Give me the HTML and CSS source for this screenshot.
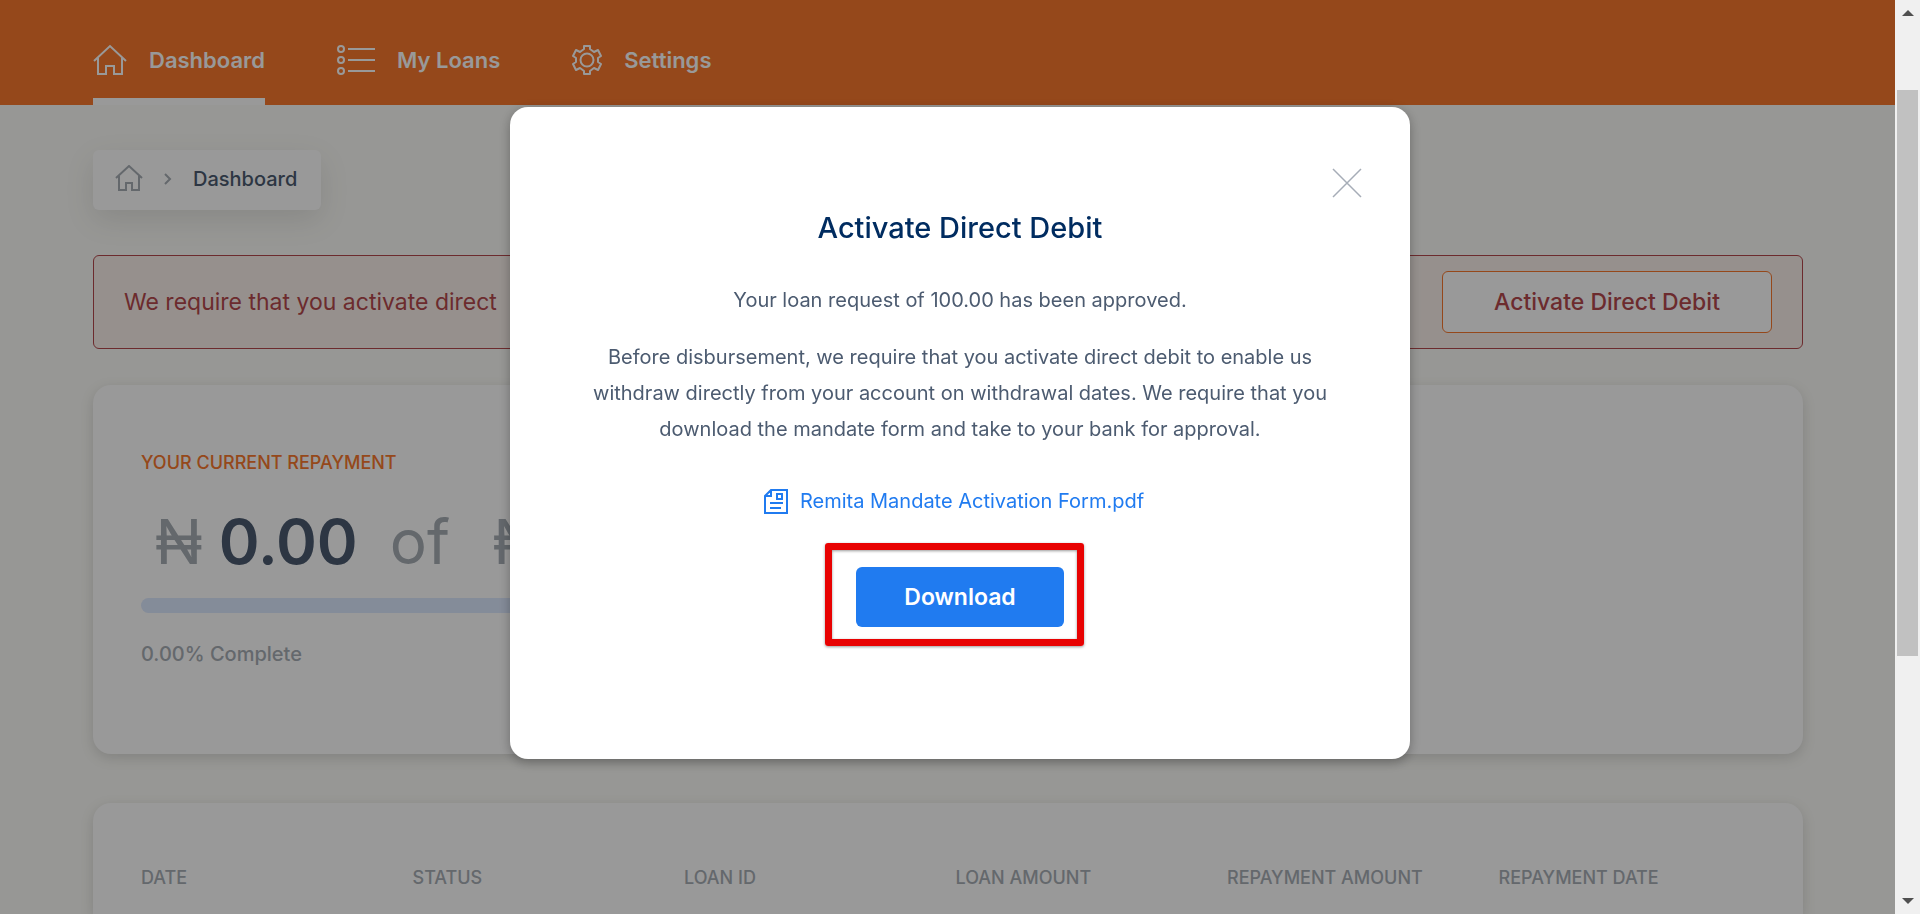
FILE: index.html
```html
<!DOCTYPE html>
<html lang="en">
<head>
  <meta charset="UTF-8">
  <meta name="viewport" content="width=device-width, initial-scale=1">
  <title>Dashboard</title>
  <link rel="stylesheet" href="styles.css">
</head>
<body>
  <div class="page">
    <header class="topbar">
      <nav class="nav">
        <a href="#" class="nav-link active">
          <svg width="34" height="32" viewBox="0 0 34 32"><path d="M1 17 L17 2 L33 17 M5 14 V30 H13 V22 H21 V30 H29 V14"/></svg>
          Dashboard
        </a>
        <a href="#" class="nav-link">
          <svg width="38" height="32" viewBox="0 0 38 32"><circle cx="4" cy="5" r="3"/><circle cx="4" cy="16" r="3"/><circle cx="4" cy="27" r="3"/><path d="M11 5 H38 M11 16 H38 M11 27 H38"/></svg>
          My Loans
        </a>
        <a href="#" class="nav-link">
          <svg width="30" height="32" viewBox="0 0 30 32"><circle cx="15" cy="16" r="6.500"/><path stroke-linejoin="round" d="M12 2 H18 V5 L22 8 L26 6 L29 12 L26 14 V18 L29 20 L26 26 L22 24 L18 27 V30 H12 V27 L8 24 L4 26 L1 20 L4 18 V14 L1 12 L4 6 L8 8 L12 5 Z"/></svg>
          Settings
        </a>
      </nav>
    </header>

    <main class="content">
      <!-- Breadcrumb -->
      <div class="breadcrumb">
        <a href="#" aria-label="Home"><svg width="28" height="28" viewBox="0 0 28 28"><path d="M1 13 L14 1 L27 13 M4 11 V25 H11 V18 H17 V25 H24 V11"/></svg></a>
        <svg class="arrow" width="8" height="12" viewBox="0 0 8 12"><path d="M1 1 L6 6 L1 11"/></svg>
        <span>Dashboard</span>
      </div>

      <div class="alert">
        <p>We require that you activate direct</p>
        <button type="button" class="btn-outline">Activate Direct Debit</button>
      </div>

      <!-- Current repayment -->
      <section class="card repayment">
        <h2>YOUR CURRENT REPAYMENT</h2>
        <div class="amount">
          <span>₦</span>
          <strong>0.00</strong>
          <span class="of">of</span>
          <span>₦</span>
        </div>
        <div class="progress"></div>
        <p class="complete">0.00% Complete</p>
      </section>

      <section class="card loans">
        <table>
          <thead>
            <tr>
              <th>DATE</th>
              <th>STATUS</th>
              <th>LOAN ID</th>
              <th>LOAN AMOUNT</th>
              <th>REPAYMENT AMOUNT</th>
              <th>REPAYMENT DATE</th>
            </tr>
          </thead>
        </table>
      </section>
    </main>
  </div>

  <!-- Direct debit modal -->
  <div class="overlay">
    <div class="modal" role="dialog" aria-labelledby="modalTitle">
      <button type="button" class="close" aria-label="Close">
        <svg width="30" height="30" viewBox="0 0 30 30"><path d="M1 1 L29 29 M29 1 L1 29"/></svg>
      </button>
      <h1 id="modalTitle">Activate Direct Debit</h1>
      <p>Your loan request of 100.00 has been approved.</p>
      <p>Before disbursement, we require that you activate direct debit to enable us withdraw directly from your account on withdrawal dates. We require that you download the mandate form and take to your bank for approval.</p>
      <a href="#" class="file-link">
        <svg width="24" height="26" viewBox="0 0 24 26"><path d="M7 2 H23 V25 H1 V8 Z M7 2 V8 H1 M13 6 H18 V11 H13 Z M6 15 H19 M6 20 H17"/></svg>
        Remita Mandate Activation Form.pdf
      </a>
      <div class="download">
        <button type="button">Download</button>
      </div>
    </div>
  </div>

  <div class="scrollbar">
    <svg width="12" height="6" viewBox="0 0 12 6"><path d="M0 6 L6 0 L12 6 Z"/></svg>
    <div class="track"><div class="thumb"></div></div>
    <svg width="12" height="6" viewBox="0 0 12 6"><path d="M0 0 L6 6 L12 0 Z"/></svg>
  </div>
</body>
</html>
```

FILE: styles.css
```css
* {
  box-sizing: border-box;
}
body {
  margin: 0;
  font-family: Inter, "Liberation Sans", sans-serif;
  background: #fcfcf8;
  color: #4c5b70;
}
h1, h2, p {
  margin: 0;
}
svg {
  flex: none;
  fill: none;
  stroke: currentColor;
  stroke-width: 2;
}
button {
  font-family: inherit;
  cursor: pointer;
}
.page {
  display: flex;
  flex-direction: column;
  height: 100vh;
  margin-right: 25px;
  overflow: hidden;
}
.topbar {
  background: #f8782d;
  padding: 0 93px;
}
.nav {
  display: flex;
  gap: 72px;
  height: 105px;
}
.nav-link {
  display: flex;
  align-items: center;
  gap: 22px;
  padding-top: 22px;
  border-bottom: 7px solid transparent;
  color: #fff;
  font-size: 22px;
  font-weight: 600;
  text-decoration: none;
}
.nav-link.active {
  border-bottom-color: #fff;
}
.content {
  display: flex;
  flex: 1;
  flex-direction: column;
  min-height: 0;
  padding: 45px 92px 0 93px;
}
.breadcrumb {
  display: flex;
  flex: none;
  align-items: center;
  align-self: flex-start;
  gap: 21px;
  height: 60px;
  padding: 0 24px 3px 22px;
  border-radius: 6px;
  background: #fff;
  box-shadow: 0 10px 30px rgba(0, 0, 0, 0.1);
  font-size: 20px;
  font-weight: 500;
}
.breadcrumb svg {
  display: block;
  color: #a7aeb5;
}
.alert {
  display: flex;
  flex: none;
  align-items: center;
  justify-content: space-between;
  height: 94px;
  margin-top: 45px;
  padding: 0 30px;
  border: 1px solid #b5494d;
  border-radius: 6px;
  background: #faf1ec;
  color: #b5494d;
  font-size: 23px;
}
.btn-outline {
  width: 330px;
  height: 62px;
  border: 1px solid #f8782d;
  border-radius: 6px;
  background: #fff;
  color: #b5494d;
  font-size: 23px;
  font-weight: 500;
}
.card {
  border-radius: 18px;
  background: #fff;
  box-shadow: 0 4px 14px rgba(0, 0, 0, 0.14);
}
.repayment {
  flex: none;
  margin-top: 36px;
  padding: 67px 48px 88px;
}
.repayment h2 {
  color: #f8782d;
  font-size: 18px;
  line-height: 22px;
  font-weight: 500;
}
.amount {
  display: flex;
  gap: 16px;
  padding: 32px 0 0 14px;
  color: #a7aeb5;
  font-size: 62px;
  line-height: 72px;
}
.amount strong {
  color: #4c5b70;
  font-weight: 600;
}
.amount .of {
  padding: 0 27px 0 16px;
}
.progress {
  width: 50%;
  height: 15px;
  margin-top: 20px;
  border-radius: 8px;
  background: #dde9ff;
}
.complete {
  margin-top: 29px;
  color: #a7aeb5;
  font-size: 20px;
  line-height: 24px;
  font-weight: 500;
}
.loans {
  flex: 1;
  margin-top: 49px;
  padding: 64px 33px 0 48px;
  border-bottom-left-radius: 0;
  border-bottom-right-radius: 0;
}
.loans table {
  width: 100%;
  table-layout: fixed;
  border-collapse: collapse;
}
.loans th {
  padding: 0;
  color: #a7aeb5;
  font-size: 18px;
  line-height: 22px;
  font-weight: 500;
  text-align: left;
  white-space: nowrap;
}
.overlay {
  position: fixed;
  inset: 0;
  padding-top: 107px;
  background: rgba(0, 0, 0, 0.4);
}
.modal {
  position: relative;
  display: flex;
  flex-direction: column;
  align-items: center;
  max-width: 900px;
  margin: 0 auto;
  padding: 103px 74px 132px;
  border-radius: 18px;
  background: #fff;
  box-shadow: 0 3px 12px rgba(0, 0, 0, 0.3);
  text-align: center;
}
.modal h1 {
  margin-bottom: 36px;
  color: #002c60;
  font-size: 29px;
  line-height: 36px;
  font-weight: 500;
}
.modal p {
  margin-bottom: 21px;
  font-size: 20px;
  line-height: 36px;
}
.close {
  position: absolute;
  top: 61px;
  right: 48px;
  padding: 0;
  border: none;
  background: none;
  color: #a6adb7;
}
.close svg {
  display: block;
  stroke-width: 1.5;
}
.file-link {
  display: flex;
  align-items: center;
  gap: 12px;
  margin: 15px 0 48px;
  padding-right: 12px;
  color: #207bf0;
  font-size: 20px;
  line-height: 36px;
  text-decoration: none;
}
.download {
  position: relative;
}
.download button {
  display: block;
  width: 208px;
  height: 60px;
  border: none;
  border-radius: 6px;
  background: #207bf0;
  color: #fff;
  font-size: 23px;
  font-weight: 600;
}
/* red frame round the button */
.download::after {
  content: "";
  position: absolute;
  inset: -24px -20px -19px -31px;
  border: 7px solid #e80202;
  border-radius: 3px;
  box-shadow: 0 1px 3px rgba(0, 0, 0, 0.4), inset 0 1px 3px rgba(0, 0, 0, 0.4);
  pointer-events: none;
}
.scrollbar {
  position: fixed;
  top: 0;
  right: 0;
  bottom: 0;
  display: flex;
  flex-direction: column;
  align-items: center;
  width: 25px;
  padding: 10px 0;
  background: #f0f0f0;
}
.scrollbar svg {
  fill: #505050;
  stroke: none;
}
.track {
  flex: 1;
  width: 21px;
  padding-top: 74px;
}
.thumb {
  height: 70%;
  background: #c1c1c1;
}
```
